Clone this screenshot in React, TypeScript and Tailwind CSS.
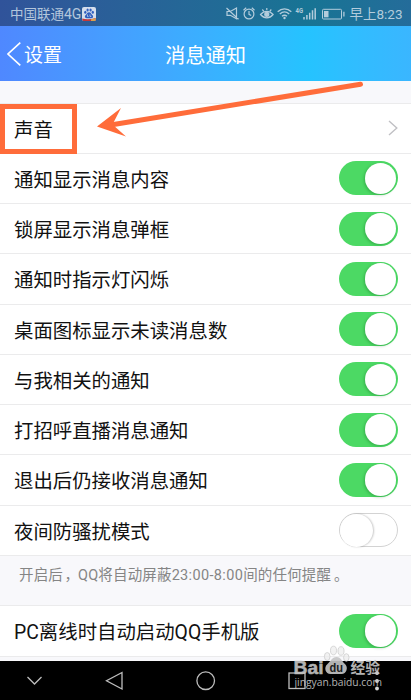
import clsx from "clsx"

interface SettingRowProps {
  label: string
  on: boolean
}

const settings: SettingRowProps[] = [
  { label: "通知显示消息内容", on: true },
  { label: "锁屏显示消息弹框", on: true },
  { label: "通知时指示灯闪烁", on: true },
  { label: "桌面图标显示未读消息数", on: true },
  { label: "与我相关的通知", on: true },
  { label: "打招呼直播消息通知", on: true },
  { label: "退出后仍接收消息通知", on: true },
  { label: "夜间防骚扰模式", on: false },
]

function Toggle({ on }: { on: boolean }) {
  return (
    <button
      className={clsx(
        "flex h-[34px] w-[59px] items-center rounded-full",
        on ? "justify-end bg-[#4cd964] pr-[2px]" : "border border-[#d3d3d3] bg-white"
      )}
    >
      <span
        className={clsx(
          "rounded-full bg-white",
          on
            ? "size-[31.500px] shadow-[-1px_1px_3px_rgba(0,80,20,0.3)]"
            : "size-[33px] shadow-[1px_0_2px_rgba(0,0,0,0.22)]"
        )}
      />
    </button>
  )
}

function SettingRow({ label, on }: SettingRowProps) {
  return (
    <div className="flex h-[50.25px] items-center justify-between border-b border-[#ebebec] bg-white pr-[13px] pl-[14px]">
      <span className="pt-[4.500px] whitespace-nowrap">{label}</span>
      <Toggle on={on} />
    </div>
  )
}

function BaiduBadge() {
  return (
    <svg width="14" height="14" viewBox="0 0 14 14" className="ml-[1px]">
      <rect width="14" height="14" rx="2" fill="#d5deec" />
      <g fill="#315fc0">
        <ellipse cx="3.3" cy="5.3" rx="1.1" ry="1.5" />
        <ellipse cx="5.6" cy="2.9" rx="1.1" ry="1.5" />
        <ellipse cx="8.6" cy="2.9" rx="1.1" ry="1.5" />
        <ellipse cx="10.8" cy="5.3" rx="1.1" ry="1.5" />
        <path d="M7 5.2c2 0 2 1.7 3.3 2.8 1.5 1.4.7 3.2-.8 3.2h-5C3 11.2 2.2 9.4 3.7 8 5 6.9 5 5.2 7 5.2z" />
      </g>
      <path d="M5.500 7.500v2h1M8 7.500v2h1.300" stroke="#d5deec" strokeWidth=".7" fill="none" />
      <path d="M.3 11.600c4 1 9 .7 13.400-.6v1.500c0 1-.7 1.500-1.500 1.500H1.800c-1 0-1.500-.7-1.500-1.500z" fill="#c5383a" />
      <path d="M9 12.300l4.700-1v1.200c0 1-.7 1.500-1.500 1.500H9z" fill="#d8a24a" />
    </svg>
  )
}

function StatusIcons() {
  return (
    <svg width="120" height="16" viewBox="225 6 120 16" fill="none" stroke="#b3ccdc" strokeWidth="1.2">
      {/* muted speaker */}
      <path d="M227 11.500h3.300l6.200-3.500v10.800l-6.200-3.500H227zM226.500 8l12 11.300" />
      {/* alarm */}
      <circle cx="249" cy="14" r="4.900" />
      <path d="M249 11v3.300l2.200 1.200M243.500 10.200l2.700-2.400M254.500 10.200l-2.700-2.400" />
      {/* eye comfort */}
      <path d="M260.500 14.500c3.600-4.200 9-4.200 12.600 0-3.600 4.400-9 4.400-12.600 0zM262.300 9.500l1.400 1.700M266.800 8v2M271.300 9.500l-1.400 1.700" />
      <circle cx="266.800" cy="14.300" r="2" fill="#b3ccdc" />
      {/* wifi */}
      <path d="M277.700 11.700c4-3.800 9.600-3.800 13.600 0M279.800 14c2.900-2.600 6.500-2.600 9.400 0M282 16.200c1.600-1.300 3.400-1.300 5 0" strokeWidth="1.400" />
      <circle cx="284.500" cy="18" r="1.200" fill="#b3ccdc" stroke="none" />
      {/* signal bars */}
      <path d="M304 17v2.500M306.900 15v4.500M309.700 12.700v6.800M312.500 10.300v9.200M315.200 8.200v11.300" strokeWidth="1.500" />
      <text x="295.500" y="12.500" fontSize="6.500" fontWeight="700" fontFamily="Roboto, sans-serif" textLength="7.500" lengthAdjust="spacingAndGlyphs" fill="#b3ccdc" stroke="none">4G</text>
      {/* battery */}
      <rect x="322.500" y="9.300" width="19" height="9.700" rx="1" strokeWidth="1" />
      <rect x="324" y="11" width="4.500" height="6.300" fill="#b3ccdc" stroke="none" />
      <path d="M343.900 11.800v4.700" strokeWidth="1.300" />
    </svg>
  )
}

function Watermark() {
  return (
    <svg width="96" height="55" viewBox="288 642 96 55" className="absolute top-[642px] left-[288px] opacity-90">
      <g fill="#c6c6c6" fontFamily="'Liberation Sans', 'Noto Sans CJK SC', sans-serif">
        <text x="293.500" y="673.500" fontSize="18.500" fontWeight="700" stroke="#c6c6c6" strokeWidth=".5" textLength="30" lengthAdjust="spacingAndGlyphs">Bai</text>
        <g stroke="#c9c9c9" strokeWidth=".8" fill="#eeeeee" fillOpacity=".8">
          <ellipse cx="327.200" cy="656.500" rx="2.800" ry="4" />
          <ellipse cx="333.500" cy="650.500" rx="3" ry="4.300" />
          <ellipse cx="341" cy="651" rx="3" ry="4.300" />
          <ellipse cx="346.300" cy="657.500" rx="2.700" ry="3.800" />
        </g>
        <path d="M336.500 657c4.500 0 5.200 4.200 8.500 7 3.700 3.300 1.500 10-3.500 10h-11c-5 0-7-6.500-3.200-9.800 3.500-2.900 4.700-7.200 9.200-7.200z" />
        <text x="329.500" y="672" fontSize="12.500" fontWeight="700" fill="#222" textLength="13.500" lengthAdjust="spacingAndGlyphs">du</text>
        <text x="350.500" y="673" fontSize="15" fontWeight="700" fontFamily="'Noto Sans CJK SC', sans-serif" textLength="29.500" lengthAdjust="spacingAndGlyphs">经验</text>
        <text x="294.500" y="685.700" fontSize="10" fontFamily="'Open Sans', sans-serif" fontWeight="500" textLength="87.500" lengthAdjust="spacingAndGlyphs">jingyan.baidu.com</text>
      </g>
    </svg>
  )
}

export default function App() {
  return (
    <div className="relative flex h-[700px] w-[411px] flex-col overflow-hidden bg-[#f8f8fb] font-[Roboto,'Noto_Sans_CJK_SC',sans-serif] text-[19.4px] leading-none text-[#111]">
      <header className="flex h-[26px] shrink-0 items-center bg-linear-to-r from-[#30539a] via-[#177494] via-75% to-[#246c9a] pt-[2px] pr-[8.500px] pl-[10px] text-[13.5px] text-[#b3c6dc]">
        <span className="pt-[1px]">
          中国联通<span className="text-[14px]">4G</span>
        </span>
        <BaiduBadge />
        <div className="ml-auto">
          <StatusIcons />
        </div>
        <span className="ml-[4px] pt-[1px] text-[#b3ccdc]">早上8:23</span>
      </header>

      <nav className="grid h-[55px] shrink-0 grid-cols-3 items-center bg-linear-to-r from-[#4f88ff] via-[#25c3ff] via-75% to-[#3ab6ff] text-white">
        <div className="flex items-center pl-[7px]">
          <svg width="14" height="24" viewBox="0 0 14 24" fill="none" stroke="white" strokeWidth="1.6">
            <path d="M13.300 .7L1 12l12.300 11.300" />
          </svg>
          <span className="ml-[3px] pt-[4px] text-[19px]">设置</span>
        </div>
        <h1 className="pt-[5px] text-center text-[20.3px] whitespace-nowrap">消息通知</h1>
      </nav>

      <main className="flex flex-col">
        <div className="mt-[22px] flex h-[50.75px] items-center justify-between border-y border-[#ebebec] bg-white pr-[13px] pl-[14px]">
          <span className="pt-[4px]">声音</span>
          <svg width="10" height="16" viewBox="0 0 10 16" fill="none" stroke="#c0c0c4" strokeWidth="1.4">
            <path d="M1 1l7.800 7L1 15" />
          </svg>
        </div>
        {settings.map((item) => (
          <SettingRow key={item.label} label={item.label} on={item.on} />
        ))}
        <p className="h-[50.5px] border-b border-[#ebebec] pt-[13px] pl-[19px] text-[14.5px] tracking-[0.15px] whitespace-nowrap text-[#858585]">
          开启后<span className="mr-[-1px] pl-[1.500px]">，</span>QQ将自动屏蔽
          <span className="tracking-[0.35px]">23:00-8:00</span>间的任何提醒
          <span className="pl-[3px]">。</span>
        </p>
        <SettingRow label="PC离线时自动启动QQ手机版" on />
      </main>

      <footer className="mt-auto h-[39px] shrink-0 bg-black">
        <svg width="411" height="39" viewBox="0 661 411 39" fill="none" stroke="#bdbdbd" strokeWidth="1.300">
          <path d="M27.500 677l7 7 7-7" />
          <path d="M122 672.500v16.500l-15.500-8.200z" />
          <circle cx="205.700" cy="680.700" r="8.800" />
          <rect x="289" y="673" width="16" height="15.500" />
          <g fill="#d8d8d8" stroke="none">
            <circle cx="377" cy="673" r="1.900" />
            <circle cx="377" cy="681" r="1.900" />
            <circle cx="377" cy="688.500" r="1.900" />
          </g>
        </svg>
      </footer>

      <Watermark />

      {/* highlight around the sound row */}
      <div className="absolute top-[104px] left-0 h-[50px] w-[77px] border-[5.500px] border-[#ff6c3a]" />
      <svg width="280" height="65" viewBox="90 78 280 65" className="absolute top-[78px] left-[90px]">
        <path d="M112 124.700L360.500 84.300" stroke="#ff6c3a" strokeWidth="5" strokeLinecap="round" />
        <path d="M97 126.500L121 108l-8.500 16.500 13.500 12z" fill="#ff6c3a" />
      </svg>
    </div>
  )
}
